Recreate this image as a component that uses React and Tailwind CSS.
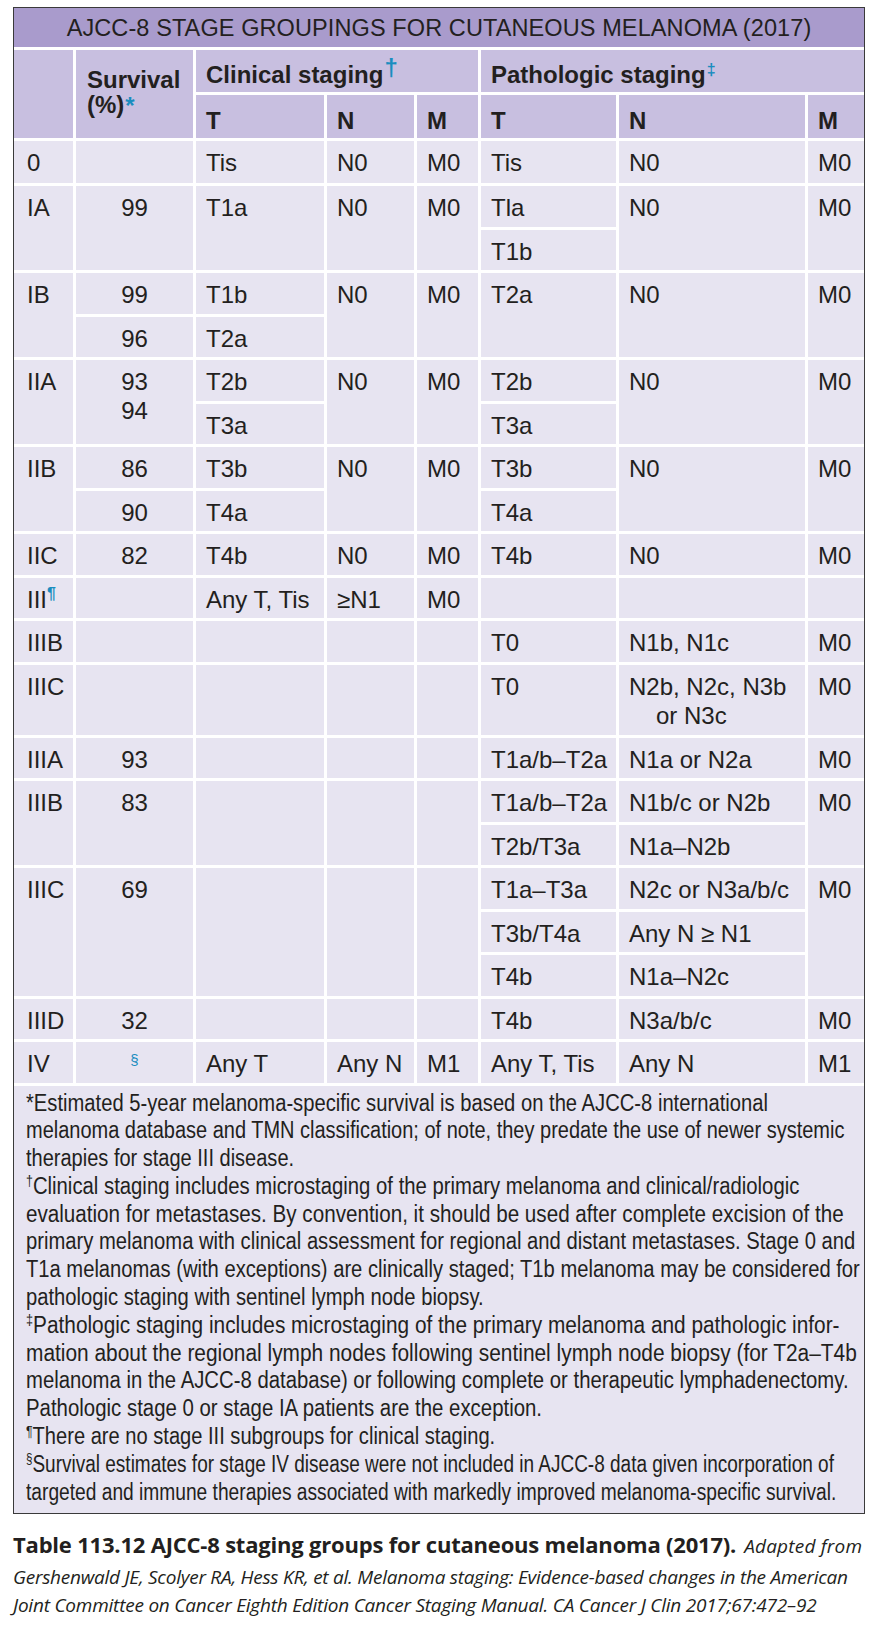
import React from "react";

const cellBase = "bg-[#e7e4f1] pt-[7px] leading-[29px]";
const td = `${cellBase} pl-[10px]`;
const stage = `${cellBase} pl-[13px]`;
const surv = `${cellBase} text-center`;
const th = "bg-[#c8bfe0] flex items-end pl-[10px] pb-[3px] leading-[29px] font-bold text-[24px]";

function Mark({ children, className = "" }) {
  return <span className={`text-[#1a8dbf] relative align-baseline leading-none ${className}`}>{children}</span>;
}

// footnote lines: marker, text, horizontal squeeze (the print face is condensed)
const notes = [
  ["", "*Estimated 5-year melanoma-specific survival is based on the AJCC-8 international", "scale-x-[0.878]"],
  ["", "melanoma database and TMN classification; of note, they predate the use of newer systemic", "scale-x-[0.869]"],
  ["", "therapies for stage III disease.", "scale-x-[0.87]"],
  ["†", "Clinical staging includes microstaging of the primary melanoma and clinical/radiologic", "scale-x-[0.883]"],
  ["", "evaluation for metastases. By convention, it should be used after complete excision of the", "scale-x-[0.897]"],
  ["", "primary melanoma with clinical assessment for regional and distant metastases. Stage 0 and", "scale-x-[0.879]"],
  ["", "T1a melanomas (with exceptions) are clinically staged; T1b melanoma may be considered for", "scale-x-[0.877]"],
  ["", "pathologic staging with sentinel lymph node biopsy.", "scale-x-[0.878]"],
  ["‡", "Pathologic staging includes microstaging of the primary melanoma and pathologic infor-", "scale-x-[0.905]"],
  ["", "mation about the regional lymph nodes following sentinel lymph node biopsy (for T2a–T4b", "scale-x-[0.908]"],
  ["", "melanoma in the AJCC-8 database) or following complete or therapeutic lymphadenectomy.", "scale-x-[0.883]"],
  ["", "Pathologic stage 0 or stage IA patients are the exception.", "scale-x-[0.887]"],
  ["¶", "There are no stage III subgroups for clinical staging.", "scale-x-[0.874]"],
  ["§", "Survival estimates for stage IV disease were not included in AJCC-8 data given incorporation of", "scale-x-[0.826]"],
  ["", "targeted and immune therapies associated with markedly improved melanoma-specific survival.", "scale-x-[0.834]"],
];

export default function App() {
  return (
    <div className="bg-white min-h-[1625px] w-[881px] pl-[13px] pt-[7px] text-[#231f20]">
      <div className="w-[852px] border border-[#3a3a3a] bg-white font-['Liberation_Sans',Arial,sans-serif] text-[24px]">
        <div className="grid grid-cols-[59px_117px_128px_87px_61px_135px_186px_56px] gap-[3px] [grid-template-rows:39px_42px_43px_42px_repeat(11,40.5px)_70px_repeat(8,40.5px)]">
          {/* title band */}
          <div className="col-span-8 bg-[#a99bcc] flex items-center justify-center pt-[3px] text-[23.5px] tracking-[0.1px]">
            AJCC-8 STAGE GROUPINGS FOR CUTANEOUS MELANOMA (2017)
          </div>

          {/* column headings */}
          <div className="row-span-2 bg-[#c8bfe0]" />
          <div className="row-span-2 bg-[#c8bfe0] flex flex-col justify-center pl-[11px] pb-[4px] font-bold text-[24px] leading-[25px]">
            <span>Survival</span>
            <span>
              (%)<Mark className="text-[24px] top-[1px] ml-[1px]">*</Mark>
            </span>
          </div>
          <div className={`${th} col-span-3`}>
            Clinical staging<Mark className="text-[24px] top-[-9px] ml-[1px]">†</Mark>
          </div>
          <div className={`${th} col-span-3`}>
            Pathologic staging<Mark className="text-[16px] top-[-11px] ml-[1px]">‡</Mark>
          </div>
          <div className={th}>T</div>
          <div className={th}>N</div>
          <div className={th}>M</div>
          <div className={th}>T</div>
          <div className={th}>N</div>
          <div className={th}>M</div>

          {/* 0 */}
          <div className={stage}>0</div>
          <div className={surv} />
          <div className={td}>Tis</div>
          <div className={td}>N0</div>
          <div className={td}>M0</div>
          <div className={td}>Tis</div>
          <div className={td}>N0</div>
          <div className={td}>M0</div>

          {/* IA */}
          <div className={`${stage} row-span-2`}>IA</div>
          <div className={`${surv} row-span-2`}>99</div>
          <div className={`${td} row-span-2`}>T1a</div>
          <div className={`${td} row-span-2`}>N0</div>
          <div className={`${td} row-span-2`}>M0</div>
          <div className={td}>Tla</div>
          <div className={`${td} row-span-2`}>N0</div>
          <div className={`${td} row-span-2`}>M0</div>
          <div className={td}>T1b</div>

          {/* IB */}
          <div className={`${stage} row-span-2`}>IB</div>
          <div className={surv}>99</div>
          <div className={td}>T1b</div>
          <div className={`${td} row-span-2`}>N0</div>
          <div className={`${td} row-span-2`}>M0</div>
          <div className={`${td} row-span-2`}>T2a</div>
          <div className={`${td} row-span-2`}>N0</div>
          <div className={`${td} row-span-2`}>M0</div>
          <div className={surv}>96</div>
          <div className={td}>T2a</div>

          {/* IIA */}
          <div className={`${stage} row-span-2`}>IIA</div>
          <div className={`${surv} row-span-2`}>
            93
            <br />
            94
          </div>
          <div className={td}>T2b</div>
          <div className={`${td} row-span-2`}>N0</div>
          <div className={`${td} row-span-2`}>M0</div>
          <div className={td}>T2b</div>
          <div className={`${td} row-span-2`}>N0</div>
          <div className={`${td} row-span-2`}>M0</div>
          <div className={td}>T3a</div>
          <div className={td}>T3a</div>

          {/* IIB */}
          <div className={`${stage} row-span-2`}>IIB</div>
          <div className={surv}>86</div>
          <div className={td}>T3b</div>
          <div className={`${td} row-span-2`}>N0</div>
          <div className={`${td} row-span-2`}>M0</div>
          <div className={td}>T3b</div>
          <div className={`${td} row-span-2`}>N0</div>
          <div className={`${td} row-span-2`}>M0</div>
          <div className={surv}>90</div>
          <div className={td}>T4a</div>
          <div className={td}>T4a</div>

          {/* IIC */}
          <div className={stage}>IIC</div>
          <div className={surv}>82</div>
          <div className={td}>T4b</div>
          <div className={td}>N0</div>
          <div className={td}>M0</div>
          <div className={td}>T4b</div>
          <div className={td}>N0</div>
          <div className={td}>M0</div>

          {/* III */}
          <div className={stage}>
            III<Mark className="text-[16px] font-bold top-[-9px]">¶</Mark>
          </div>
          <div className={surv} />
          <div className={td}>Any T, Tis</div>
          <div className={td}>≥N1</div>
          <div className={td}>M0</div>
          <div className={td} />
          <div className={td} />
          <div className={td} />

          {/* IIIB (pathologic T0) */}
          <div className={stage}>IIIB</div>
          <div className={surv} />
          <div className={td} />
          <div className={td} />
          <div className={td} />
          <div className={td}>T0</div>
          <div className={td}>N1b, N1c</div>
          <div className={td}>M0</div>

          {/* IIIC (pathologic T0) */}
          <div className={stage}>IIIC</div>
          <div className={surv} />
          <div className={td} />
          <div className={td} />
          <div className={td} />
          <div className={td}>T0</div>
          <div className={`${td} whitespace-nowrap`}>
            N2b, N2c, N3b
            <br />
            <span className="pl-[27px]">or N3c</span>
          </div>
          <div className={td}>M0</div>

          {/* IIIA */}
          <div className={stage}>IIIA</div>
          <div className={surv}>93</div>
          <div className={td} />
          <div className={td} />
          <div className={td} />
          <div className={td}>T1a/b–T2a</div>
          <div className={td}>N1a or N2a</div>
          <div className={td}>M0</div>

          {/* IIIB */}
          <div className={`${stage} row-span-2`}>IIIB</div>
          <div className={`${surv} row-span-2`}>83</div>
          <div className={`${td} row-span-2`} />
          <div className={`${td} row-span-2`} />
          <div className={`${td} row-span-2`} />
          <div className={td}>T1a/b–T2a</div>
          <div className={td}>N1b/c or N2b</div>
          <div className={`${td} row-span-2`}>M0</div>
          <div className={td}>T2b/T3a</div>
          <div className={td}>N1a–N2b</div>

          {/* IIIC */}
          <div className={`${stage} row-span-3`}>IIIC</div>
          <div className={`${surv} row-span-3`}>69</div>
          <div className={`${td} row-span-3`} />
          <div className={`${td} row-span-3`} />
          <div className={`${td} row-span-3`} />
          <div className={td}>T1a–T3a</div>
          <div className={`${td} whitespace-nowrap`}>N2c or N3a/b/c</div>
          <div className={`${td} row-span-3`}>M0</div>
          <div className={td}>T3b/T4a</div>
          <div className={td}>Any N ≥ N1</div>
          <div className={td}>T4b</div>
          <div className={td}>N1a–N2c</div>

          {/* IIID */}
          <div className={stage}>IIID</div>
          <div className={surv}>32</div>
          <div className={td} />
          <div className={td} />
          <div className={td} />
          <div className={td}>T4b</div>
          <div className={td}>N3a/b/c</div>
          <div className={td}>M0</div>

          {/* IV */}
          <div className={stage}>IV</div>
          <div className={surv}>
            <Mark className="text-[15px] top-[-7px]">§</Mark>
          </div>
          <div className={td}>Any T</div>
          <div className={td}>Any N</div>
          <div className={td}>M1</div>
          <div className={td}>Any T, Tis</div>
          <div className={td}>Any N</div>
          <div className={td}>M1</div>

          {/* footnotes */}
          <div className="col-span-8 bg-[#e7e4f1] pl-[12px] pt-[4px] pb-[7px] overflow-hidden text-[23px] leading-[27.8px]">
            {notes.map(([m, t, sq], i) => (
              <div key={i} className={`origin-left whitespace-nowrap ${sq}`}>
                {m && <sup className="text-[14px] top-[-0.55em]">{m}</sup>}
                {t}
              </div>
            ))}
          </div>
        </div>
      </div>

      {/* caption */}
      <div className="mt-[15px] font-['Open_Sans',sans-serif] whitespace-nowrap text-[#231f20]">
        <div className="leading-[31px]">
          <span className="font-bold text-[22px] tracking-[-0.2px]">
            Table 113.12 AJCC-8 staging groups for cutaneous melanoma (2017).
          </span>
          <span className="italic text-[19px] tracking-[0.2px] ml-[8px]">Adapted from</span>
        </div>
        <div className="italic text-[19px] tracking-[-0.25px] leading-[28px]">
          Gershenwald JE, Scolyer RA, Hess KR, et al. Melanoma staging: Evidence-based changes in the American
        </div>
        <div className="italic text-[19px] tracking-[-0.22px] leading-[28px]">
          Joint Committee on Cancer Eighth Edition Cancer Staging Manual. CA Cancer J Clin 2017;67:472–92
        </div>
      </div>
    </div>
  );
}
